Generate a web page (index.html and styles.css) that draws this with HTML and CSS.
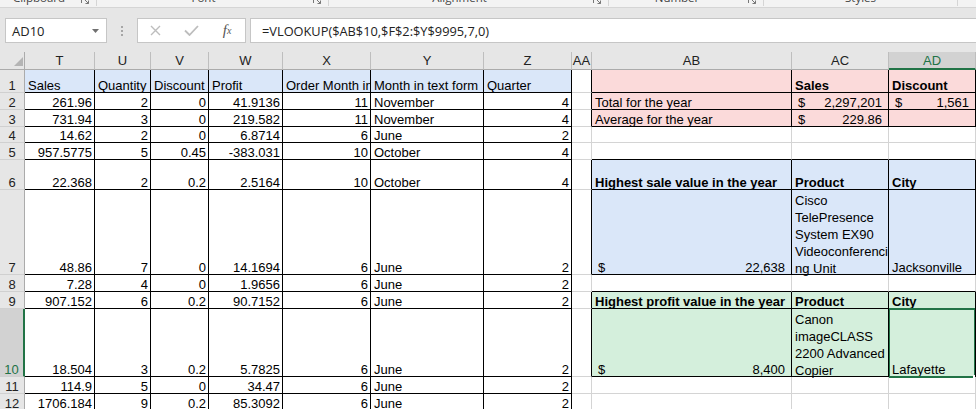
FILE: index.html
```html
<!DOCTYPE html>
<html>
<head>
<meta charset="utf-8">
<title>Sheet</title>
<link rel="stylesheet" href="styles.css">
</head>
<body>
<div class="ribbon">
  <div class="grp g1"><span class="glabel">Clipboard</span><span class="launch"><svg width="8" height="8" viewBox="0 0 8 8"><path d="M0.5 7V0.5H7M3 3L7.5 7.5M7.5 4.5V7.5H4.5" fill="none" stroke="#777" stroke-width="1"/></svg></span></div>
  <div class="grp g2"><span class="glabel">Font</span><span class="launch"><svg width="8" height="8" viewBox="0 0 8 8"><path d="M0.5 7V0.5H7M3 3L7.5 7.5M7.5 4.5V7.5H4.5" fill="none" stroke="#777" stroke-width="1"/></svg></span></div>
  <div class="grp g3"><span class="glabel">Alignment</span><span class="launch"><svg width="8" height="8" viewBox="0 0 8 8"><path d="M0.5 7V0.5H7M3 3L7.5 7.5M7.5 4.5V7.5H4.5" fill="none" stroke="#777" stroke-width="1"/></svg></span></div>
  <div class="grp g4"><span class="glabel">Number</span><span class="launch"><svg width="8" height="8" viewBox="0 0 8 8"><path d="M0.5 7V0.5H7M3 3L7.5 7.5M7.5 4.5V7.5H4.5" fill="none" stroke="#777" stroke-width="1"/></svg></span></div>
  <div class="grp g5"><span class="glabel">Styles</span></div>
</div>

<div class="fbar">
  <div class="namebox"><span class="nm">AD10</span><svg width="7" height="4" viewBox="0 0 7 4"><path d="M0 0H7L3.5 4Z" fill="#707070"/></svg></div>
  <div class="dots"><i></i><i></i><i></i></div>
  <div class="fxbox">
    <span class="fxbtn"><svg width="11" height="11" viewBox="0 0 11 11"><path d="M1 1L10 10M10 1L1 10" stroke="#BDBDBD" stroke-width="1.4"/></svg></span>
    <span class="fxbtn"><svg width="15" height="11" viewBox="0 0 15 11"><path d="M1 5.5L5.5 10L14 1" fill="none" stroke="#BDBDBD" stroke-width="1.8"/></svg></span>
    <span class="fxbtn fxt"><i>f</i><sub>x</sub></span>
  </div>
  <div class="finput">=VLOOKUP($AB$10,$F$2:$Y$9995,7,0)</div>
</div>

<div class="sheet">
  <div class="corner"><svg width="9" height="9" viewBox="0 0 9 9"><path d="M9 0V9H0Z" fill="#B4B4B4"/></svg></div>
  <div class="ch">T</div><div class="ch">U</div><div class="ch">V</div><div class="ch">W</div><div class="ch">X</div><div class="ch">Y</div><div class="ch">Z</div><div class="ch">AA</div><div class="ch">AB</div><div class="ch">AC</div><div class="ch sel">AD</div>

  <!-- row 1 -->
  <div class="rh">1</div>
  <div class="c k blue">Sales</div><div class="c k blue">Quantity</div><div class="c k blue">Discount</div><div class="c k blue">Profit</div><div class="c k blue">Order Month in</div><div class="c k blue">Month in text form</div><div class="c k blue">Quarter</div>
  <div class="c kr"></div>
  <div class="c k pink"></div><div class="c k pink b">Sales</div><div class="c k pink b">Discount</div>

  <!-- row 2 -->
  <div class="rh">2</div>
  <div class="c k n">261.96</div><div class="c k n">2</div><div class="c k n">0</div><div class="c k n">41.9136</div><div class="c k n">11</div><div class="c k">November</div><div class="c k n">4</div>
  <div class="c kr"></div>
  <div class="c k pink">Total for the year</div>
  <div class="c k pink acc"><span>$</span><span>2,297,201</span></div>
  <div class="c k pink acc"><span>$</span><span>1,561</span></div>

  <!-- row 3 -->
  <div class="rh">3</div>
  <div class="c k n">731.94</div><div class="c k n">3</div><div class="c k n">0</div><div class="c k n">219.582</div><div class="c k n">11</div><div class="c k">November</div><div class="c k n">4</div>
  <div class="c kr"></div>
  <div class="c k pink">Average for the year</div>
  <div class="c k pink acc"><span>$</span><span>229.86</span></div>
  <div class="c k pink"></div>

  <!-- row 4 -->
  <div class="rh">4</div>
  <div class="c k n">14.62</div><div class="c k n">2</div><div class="c k n">0</div><div class="c k n">6.8714</div><div class="c k n">6</div><div class="c k">June</div><div class="c k n">2</div>
  <div class="c"></div><div class="c"></div><div class="c"></div><div class="c"></div>

  <!-- row 5 -->
  <div class="rh">5</div>
  <div class="c k n">957.5775</div><div class="c k n">5</div><div class="c k n">0.45</div><div class="c k n">-383.031</div><div class="c k n">10</div><div class="c k">October</div><div class="c k n">4</div>
  <div class="c"></div><div class="c kb"></div><div class="c kb"></div><div class="c kb"></div>

  <!-- row 6 -->
  <div class="rh">6</div>
  <div class="c k n">22.368</div><div class="c k n">2</div><div class="c k n">0.2</div><div class="c k n">2.5164</div><div class="c k n">10</div><div class="c k">October</div><div class="c k n">4</div>
  <div class="c kr"></div>
  <div class="c k blue b">Highest sale value in the year</div><div class="c k blue b">Product</div><div class="c k blue b">City</div>

  <!-- row 7 -->
  <div class="rh">7</div>
  <div class="c k n">48.86</div><div class="c k n">7</div><div class="c k n">0</div><div class="c k n">14.1694</div><div class="c k n">6</div><div class="c k">June</div><div class="c k n">2</div>
  <div class="c kr"></div>
  <div class="c k blue acc"><span>$</span><span>22,638</span></div>
  <div class="c k blue"><div class="wrap">Cisco<br>TelePresence<br>System EX90<br>Videoconferenci<br>ng Unit</div></div>
  <div class="c k blue">Jacksonville</div>

  <!-- row 8 -->
  <div class="rh">8</div>
  <div class="c k n">7.28</div><div class="c k n">4</div><div class="c k n">0</div><div class="c k n">1.9656</div><div class="c k n">6</div><div class="c k">June</div><div class="c k n">2</div>
  <div class="c"></div><div class="c kb"></div><div class="c kb"></div><div class="c kb"></div>

  <!-- row 9 -->
  <div class="rh">9</div>
  <div class="c k n">907.152</div><div class="c k n">6</div><div class="c k n">0.2</div><div class="c k n">90.7152</div><div class="c k n">6</div><div class="c k">June</div><div class="c k n">2</div>
  <div class="c kr"></div>
  <div class="c k green b">Highest profit value in the year</div><div class="c k green b">Product</div><div class="c k green b">City</div>

  <!-- row 10 -->
  <div class="rh sel">10</div>
  <div class="c k n">18.504</div><div class="c k n">3</div><div class="c k n">0.2</div><div class="c k n">5.7825</div><div class="c k n">6</div><div class="c k">June</div><div class="c k n">2</div>
  <div class="c kr"></div>
  <div class="c k green acc"><span>$</span><span>8,400</span></div>
  <div class="c k green"><div class="wrap">Canon<br>imageCLASS<br>2200 Advanced<br>Copier</div></div>
  <div class="c k green active">Lafayette</div>

  <!-- row 11 -->
  <div class="rh">11</div>
  <div class="c k n">114.9</div><div class="c k n">5</div><div class="c k n">0</div><div class="c k n">34.47</div><div class="c k n">6</div><div class="c k">June</div><div class="c k n">2</div>
  <div class="c"></div><div class="c"></div><div class="c"></div><div class="c"></div>

  <!-- row 12 -->
  <div class="rh">12</div>
  <div class="c k n">1706.184</div><div class="c k n">9</div><div class="c k n">0.2</div><div class="c k n">85.3092</div><div class="c k n">6</div><div class="c k">June</div><div class="c k n">2</div>
  <div class="c"></div><div class="c"></div><div class="c"></div><div class="c"></div>
</div>
</body>
</html>
```

FILE: styles.css
```css
html, body {
  margin: 0;
  padding: 0;
  overflow: hidden;
  background: #ffffff;
}
body {
  width: 976px;
  height: 409px;
  font-family: "Liberation Sans", Arial, sans-serif;
  color: #000;
}

/* ribbon remnant */
.ribbon {
  height: 8px;
  box-sizing: border-box;
  border-bottom: 1px solid #D5D5D5;
  background: #F3F3F3;
  display: flex;
  overflow: hidden;
}
.grp {
  display: flex;
  box-sizing: border-box;
  border-right: 1px solid #D5D5D5;
  height: 6px;
}
.g1 { width: 97px; }
.g2 { width: 232px; }
.g3 { width: 280px; }
.g4 { width: 155px; }
.g5 { width: 194px; }
.glabel {
  flex: 1;
  text-align: center;
  font: 11.5px "Open Sans", "Noto Sans", sans-serif;
  line-height: 12px;
  margin-top: -8px;
  color: #444;
  white-space: nowrap;
}
.launch {
  width: 18px;
}
.launch svg {
  display: block;
  margin: -4px 0 0 3px;
}

/* formula bar */
.fbar {
  height: 44px;
  box-sizing: border-box;
  background: #E6E6E6;
  display: flex;
  align-items: flex-start;
  padding: 10px 0 0 5px;
}
.namebox {
  width: 102px;
  height: 25px;
  box-sizing: border-box;
  border: 1px solid #C6C6C6;
  background: #fff;
  display: flex;
  align-items: center;
  padding: 0 7px 0 6px;
  font: 13px "Open Sans", "Noto Sans", sans-serif;
  color: #222;
}
.namebox .nm { flex: 1; }
.dots {
  width: 30px;
  height: 25px;
  display: flex;
  flex-direction: column;
  align-items: center;
  justify-content: center;
  gap: 2px;
}
.dots i {
  display: block;
  width: 2px;
  height: 2px;
  background: #A6A6A6;
}
.fxbox {
  width: 109px;
  height: 25px;
  box-sizing: border-box;
  border: 1px solid #C6C6C6;
  background: #fff;
  display: flex;
}
.fxbtn {
  width: 36px;
  display: flex;
  align-items: center;
  justify-content: center;
}
.fxt {
  font-family: "Liberation Serif", serif;
  color: #555;
  font-size: 15px;
}
.fxt i { font-style: italic; }
.fxt sub {
  font-size: 10px;
  font-style: italic;
  vertical-align: -1px;
}
.finput {
  flex: 1;
  margin-left: 4px;
  margin-right: -2px;
  height: 25px;
  box-sizing: border-box;
  border: 1px solid #C6C6C6;
  background: #fff;
  display: flex;
  align-items: center;
  padding-left: 11px;
  font: 12.8px "Open Sans", "Noto Sans", sans-serif;
  color: #222;
  white-space: nowrap;
}

/* sheet grid */
.sheet {
  display: grid;
  grid-template-columns: 25px 70px 56px 58px 74px 88px 113px 88px 20px 200px 97px 87px;
  grid-template-rows: 18px 23px 17px 17px 16px 17px 30px 85px 17px 17px 68px 17px 17px;
  font-size: 13px;
}
.corner {
  background: #E6E6E6;
  border-right: 1px solid #ABABAB;
  border-bottom: 1px solid #ABABAB;
  display: flex;
  align-items: flex-end;
  justify-content: flex-end;
  padding: 0 1px 3px 0;
}
.corner svg { display: block; }
.ch {
  background: #E6E6E6;
  border-right: 1px solid #BEBEBE;
  border-bottom: 1px solid #ABABAB;
  text-align: center;
  line-height: 17px;
  color: #222;
  overflow: hidden;
  white-space: nowrap;
}
.ch.sel {
  background: #D2D2D2;
  color: #217346;
  border-bottom: 2px solid #217346;
}
.rh {
  background: #E6E6E6;
  border-right: 1px solid #ABABAB;
  border-bottom: 1px solid #D0D0D0;
  display: flex;
  align-items: flex-end;
  justify-content: center;
  line-height: 12px;
  color: #222;
}
.rh.sel {
  background: #D2D2D2;
  color: #217346;
  border-right: 2px solid #217346;
}
.c {
  border-right: 1px solid #D4D4D4;
  border-bottom: 1px solid #D4D4D4;
  display: flex;
  align-items: flex-end;
  padding: 0 2px 0 3px;
  line-height: 12px;
  white-space: nowrap;
  overflow-x: clip;
  overflow-y: visible;
  min-width: 0;
}
.n { justify-content: flex-end; }
.k { border-right-color: #000; border-bottom-color: #000; }
.kr { border-right-color: #000; }
.kb { border-bottom-color: #000; }
.b { font-weight: bold; }
.blue { background: #DAE7F9; }
.pink { background: #FBDADA; }
.green { background: #D4EFDC; }
.acc {
  justify-content: space-between;
  padding: 0 6px 0 6px;
}
.wrap {
  white-space: nowrap;
  line-height: 17px;
  margin-bottom: -2.5px;
}
.active { position: relative; }
.active::after {
  content: "";
  position: absolute;
  top: -1px;
  left: -1px;
  right: -1px;
  bottom: -2px;
  border: 2px solid #217346;
  pointer-events: none;
}
.active::before {
  content: "";
  position: absolute;
  right: -1px;
  bottom: -2px;
  width: 3px;
  height: 3px;
  background: #fff;
  z-index: 2;
}
```
